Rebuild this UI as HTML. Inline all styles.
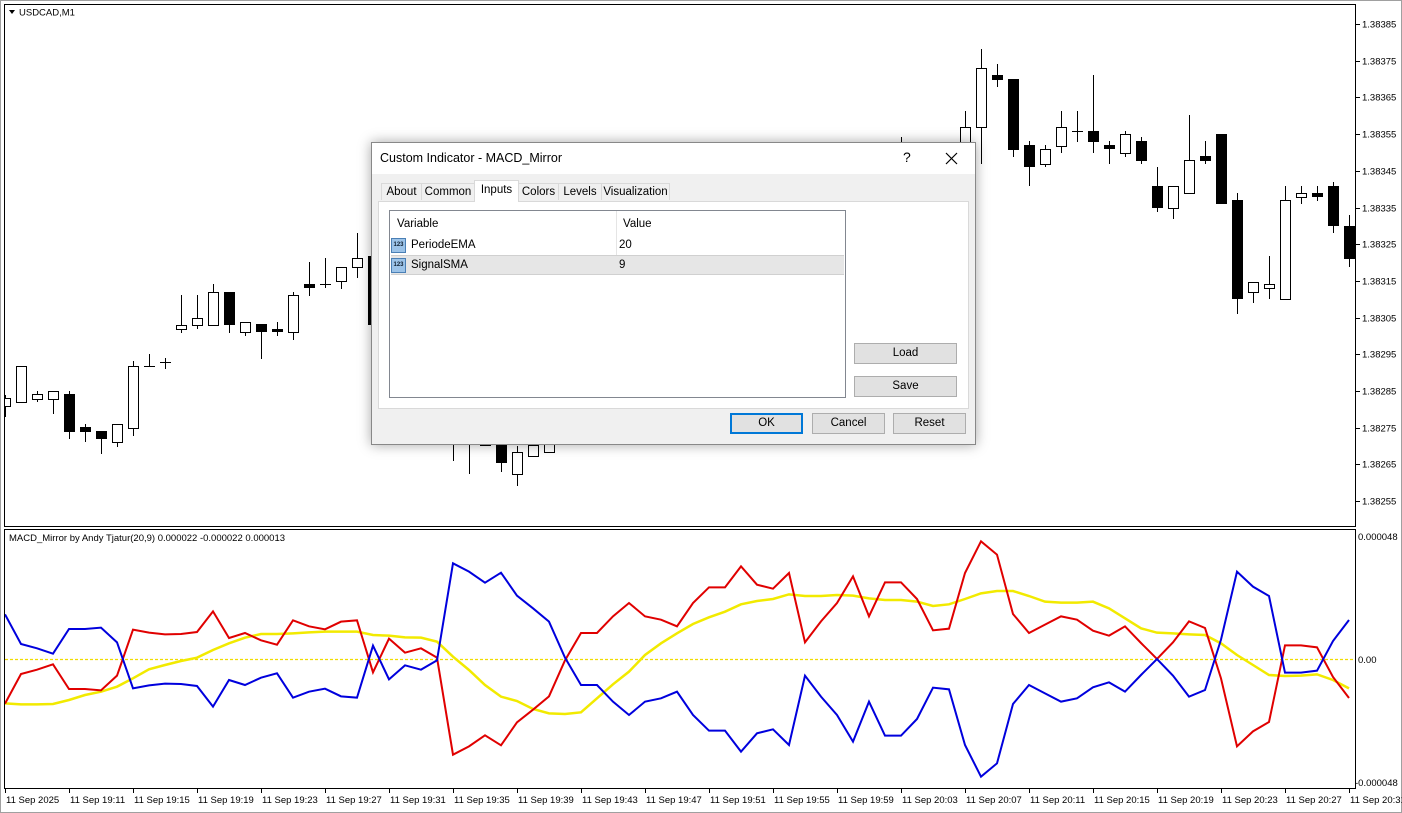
<!DOCTYPE html>
<html><head><meta charset="utf-8"><style>
body{margin:0;width:1402px;height:813px;overflow:hidden;background:#fff;position:relative;font-family:"Liberation Sans",sans-serif}
svg{position:absolute;left:0;top:0}
.dlg{position:absolute;left:371px;top:142px;width:603px;height:301px;background:#f0f0f0;border:1px solid #888;box-shadow:0 0 12px rgba(0,0,0,.35);font-size:11.5px;color:#000}
.tb{position:absolute;left:0;top:0;width:603px;height:31px;background:#fff}
.ab{position:absolute}
.tab{position:absolute;top:40px;height:17px;border:1px solid #d9d9d9;border-bottom:none;background:#f0f0f0;text-align:center;line-height:17px;box-sizing:border-box}
.panel{position:absolute;left:6px;top:58px;width:589px;height:206px;background:#fff;border:1px solid #d9d9d9}
.lv{position:absolute;left:11px;top:9px;width:455px;height:186px;border:1px solid #828790;background:#fff}
.btn{position:absolute;background:#e1e1e1;border:1px solid #adadad;text-align:center;box-sizing:border-box;line-height:18px}
.ic{position:absolute;left:1px;width:15px;height:15px;background:#9cc3e8;border:1px solid #4a7fb5;box-sizing:border-box;font-size:6px;line-height:13px;color:#123;text-align:center;font-weight:bold}
</style></head><body>
<svg width="1402" height="813" viewBox="0 0 1402 813">
<rect x="0.5" y="0.5" width="1401" height="812" fill="#fff" stroke="#a0a0a0"/>
<rect x="4.5" y="4.5" width="1351" height="522" fill="#fff" stroke="#000"/>
<rect x="4.5" y="529.5" width="1351" height="259" fill="#fff" stroke="#000"/>
<defs><clipPath id="c1"><rect x="5" y="5" width="1350" height="521"/></clipPath><clipPath id="c2"><rect x="5" y="530" width="1350" height="258"/></clipPath></defs>
<g id="cs" clip-path="url(#c1)" stroke="#000" stroke-width="1" shape-rendering="crispEdges"></g>
<g clip-path="url(#c2)" fill="none">
<line x1="5" y1="659.5" x2="1355" y2="659.5" stroke="#f0dc00" stroke-width="1.2" stroke-dasharray="3,2"/>
<polyline id="yl" stroke="#f2ea00" stroke-width="2.5" vector-effect="non-scaling-stroke" transform="translate(0,525) scale(1,0.33333)" points=""/>
<polyline id="rl" stroke="#e00000" stroke-width="2" vector-effect="non-scaling-stroke" transform="translate(0,793) scale(1,-0.33333)" points=""/>
<polyline id="bl" stroke="#0000dd" stroke-width="2" vector-effect="non-scaling-stroke" transform="translate(0,525) scale(1,0.33333)" points=""/>
</g>
<g font-size="10" fill="#000">
<polygon points="9,10 15,10 12,14" fill="#000"/>
<text x="19" y="15.5" font-size="9.5">USDCAD,M1</text>
<text x="9" y="541" font-size="9.5">MACD_Mirror by Andy Tjatur(20,9) 0.000022 -0.000022 0.000013</text>
</g>
<g id="pa" font-size="9.5" fill="#000"></g>
<g id="ta" font-size="9.5" fill="#000"></g>
</svg>
<div class="dlg">
<div class="tb"></div>
<div class="ab" style="left:8px;top:8px;font-size:12.5px">Custom Indicator - MACD_Mirror</div>
<div class="ab" style="left:531px;top:6px;font-size:14px">?</div>
<svg style="left:573px;top:9px;position:absolute" width="13" height="13"><path d="M1 1L12 12M12 1L1 12" stroke="#000" stroke-width="1.2"/></svg>
<div class="panel"></div>
<div class="tab" style="left:9px;width:41px">About</div>
<div class="tab" style="left:49px;width:54px">Common</div>
<div class="tab" style="left:102px;top:37px;height:22px;width:45px;background:#fff;line-height:19px">Inputs</div>
<div class="tab" style="left:146px;width:41px">Colors</div>
<div class="tab" style="left:186px;width:44px">Levels</div>
<div class="tab" style="left:229px;width:69px">Visualization</div>
<div class="ab" style="left:6px;top:58px;width:589px;height:206px">
<div class="lv">
<div class="ab" style="left:0;top:0;width:455px;height:25px;background:#fff"></div>
<div class="ab" style="left:7px;top:7px">Variable</div>
<div class="ab" style="left:226px;top:0;width:1px;height:64px;background:#e5e5e5"></div>
<div class="ab" style="left:233px;top:7px">Value</div>
<div class="ab" style="left:1px;top:44px;width:453px;height:20px;background:#e6e6e6;border-top:1px solid #d0d0d0;border-bottom:1px solid #d0d0d0;box-sizing:border-box"></div>
<div class="ic" style="top:27px">123</div>
<div class="ab" style="left:21px;top:28px">PeriodeEMA</div>
<div class="ab" style="left:229px;top:28px">20</div>
<div class="ic" style="top:47px">123</div>
<div class="ab" style="left:21px;top:48px">SignalSMA</div>
<div class="ab" style="left:229px;top:48px">9</div>
</div>
</div>
<div class="btn" style="left:482px;top:200px;width:103px;height:21px">Load</div>
<div class="btn" style="left:482px;top:233px;width:103px;height:21px">Save</div>
<div class="btn" style="left:358px;top:270px;width:73px;height:21px;border:2px solid #0078d7;line-height:17px">OK</div>
<div class="btn" style="left:440px;top:270px;width:73px;height:21px">Cancel</div>
<div class="btn" style="left:521px;top:270px;width:73px;height:21px">Reset</div>
</div>
<script>
var C=[[5,398,406,395,417,'w'],[21,366,402,366,402,'w'],[37,394,399,391,402,'w'],[53,391,399,391,414,'w'],[69,394,432,391,439,'b'],[85,427,432,424,442,'b'],[101,431,439,431,454,'b'],[117,424,442,424,447,'w'],[133,366,428,361,436,'w'],[149,366,366,354,366,'d'],[165,362,362,358,369,'d'],[181,325,329,295,333,'w'],[197,318,325,295,329,'w'],[213,292,325,284,325,'w'],[229,292,325,292,333,'b'],[245,322,332,322,336,'w'],[261,324,332,324,359,'b'],[277,329,332,322,336,'b'],[293,295,332,292,340,'w'],[309,284,288,262,296,'b'],[325,284,284,258,288,'d'],[341,267,281,267,289,'w'],[357,258,267,233,278,'w'],[373,256,325,256,325,'b'],
[453,436,445,436,461,'b'],[469,440,441,436,474,'d'],[485,436,445,436,445,'w'],[501,436,463,436,472,'b'],[517,452,474,446,486,'w'],[533,445,456,443,456,'w'],[549,436,452,436,452,'w'],[901,150,200,137,200,'w'],
[965,127,200,111,210,'w'],[981,68,127,49,164,'w'],[997,75,80,64,87,'b'],[1013,79,150,79,157,'b'],[1029,145,167,141,186,'b'],[1045,149,164,145,167,'w'],[1061,127,146,111,153,'w'],[1077,131,131,111,142,'d'],[1093,131,142,75,153,'b'],[1109,145,149,141,164,'b'],[1125,134,153,131,157,'w'],[1141,141,161,137,164,'b'],[1157,186,208,167,212,'b'],[1173,186,208,186,219,'w'],[1189,160,193,115,193,'w'],[1205,156,161,141,164,'b'],[1221,134,204,134,204,'b'],[1237,200,299,193,314,'b'],[1253,282,292,282,303,'w'],[1269,284,288,256,299,'w'],[1285,200,299,186,299,'w'],[1301,193,197,186,204,'w'],[1317,193,197,186,201,'b'],[1333,186,226,182,233,'b'],[1349,226,259,215,267,'b']];
var s='';C.forEach(function(c){var x=c[0];s+='<line x1="'+(x+.5)+'" y1="'+c[3]+'" x2="'+(x+.5)+'" y2="'+c[4]+'"/>';
if(c[5]=='d')s+='<line x1="'+(x-5)+'" y1="'+(c[1]+.5)+'" x2="'+(x+6)+'" y2="'+(c[1]+.5)+'"/>';
else if(c[5]=='b')s+='<rect x="'+(x-5)+'" y="'+c[1]+'" width="11" height="'+Math.max(c[2]-c[1],3)+'" fill="#000" stroke="none"/>';
else s+='<rect x="'+(x-4.5)+'" y="'+(c[1]+.5)+'" width="10" height="'+(c[2]-c[1])+'" fill="#fff"/>';});
document.getElementById('cs').innerHTML=s;
var B=[268,357,370,386,312,312,308,352,490,481,476,477,483,545,465,480,458,445,518,500,491,514,518,362,463,421,434,406,115,140,173,143,212,250,290,398,480,480,530,570,530,520,500,570,617,617,680,625,613,660,452,515,570,650,530,632,632,582,488,493,660,755,715,537,480,505,530,520,487,472,500,450,402,452,515,495,344,140,185,213,443,443,437,348,285];
var Y=[535,538,538,537,525,510,500,485,460,433,420,408,398,375,355,338,327,327,325,322,320,320,320,330,332,337,338,350,395,435,480,515,528,552,565,567,562,520,478,440,390,355,325,297,277,260,238,228,222,208,213,213,210,212,220,225,225,230,243,238,222,205,198,198,213,230,233,233,230,250,280,310,323,325,328,330,355,390,420,450,453,452,448,465,490];
function pts(a){return a.map(function(v,i){return (5+16*i)+','+v}).join(' ')}
document.getElementById('bl').setAttribute('points',pts(B));
document.getElementById('rl').setAttribute('points',pts(B));
document.getElementById('yl').setAttribute('points',pts(Y));
var P=['1.38385','1.38375','1.38365','1.38355','1.38345','1.38335','1.38325','1.38315','1.38305','1.38295','1.38285','1.38275','1.38265','1.38255'];
var p='';P.forEach(function(t,i){var y=Math.round(24+i*36.7);p+='<line x1="1356" y1="'+(y+.5)+'" x2="1360" y2="'+(y+.5)+'" stroke="#000"/><text x="1362" y="'+(y+3.5)+'">'+t+'</text>';});
p+='<text x="1358" y="540">0.000048</text><text x="1358" y="663">0.00</text><text x="1355" y="786">-0.000048</text>';
document.getElementById('pa').innerHTML=p;
var T=['11 Sep 2025'];for(var h=0;h<21;h++){var m=11+h*4,hh=19+Math.floor(m/60);m=m%60;T.push('11 Sep '+hh+':'+(m<10?'0':'')+m);}
var t='';T.forEach(function(l,i){var x=5+64*i;t+='<line x1="'+(x+.5)+'" y1="789" x2="'+(x+.5)+'" y2="793" stroke="#000"/><text x="'+(x+1)+'" y="803">'+l+'</text>';});
document.getElementById('ta').innerHTML=t;
</script>
</body></html>
